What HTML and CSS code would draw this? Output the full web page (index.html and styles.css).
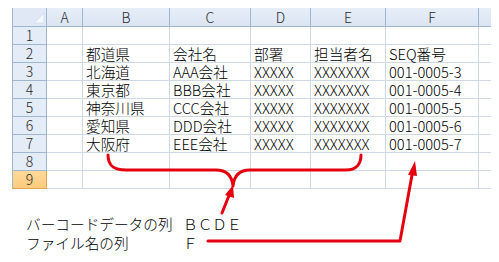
FILE: index.html
```html
<!DOCTYPE html>
<html lang="ja">
<head>
<meta charset="utf-8">
<link rel="stylesheet" href="styles.css">
</head>
<body>
<div class="sheet">
  <div class="grid">
    <div class="corner"><svg width="33" height="18" viewBox="0 0 33 18"><polygon points="21,15 31,15 31,5" fill="#f4f7fb" stroke="#c5d1e2" stroke-width="0.5"/></svg></div>
    <div class="ch">A</div><div class="ch">B</div><div class="ch">C</div><div class="ch">D</div><div class="ch">E</div><div class="ch">F</div><div class="ch edge"></div>

    <div class="rh">1</div><div class="c"></div><div class="c"></div><div class="c"></div><div class="c"></div><div class="c"></div><div class="c"></div><div class="c edge"></div>

    <div class="rh">2</div><div class="c"></div><div class="c">都道県</div><div class="c">会社名</div><div class="c">部署</div><div class="c">担当者名</div><div class="c">SEQ番号</div><div class="c edge"></div>

    <div class="rh">3</div><div class="c"></div><div class="c">北海道</div><div class="c">AAA会社</div><div class="c">XXXXX</div><div class="c">XXXXXXX</div><div class="c">001-0005-3</div><div class="c edge"></div>

    <div class="rh">4</div><div class="c"></div><div class="c">東京都</div><div class="c">BBB会社</div><div class="c">XXXXX</div><div class="c">XXXXXXX</div><div class="c">001-0005-4</div><div class="c edge"></div>

    <div class="rh">5</div><div class="c"></div><div class="c">神奈川県</div><div class="c">CCC会社</div><div class="c">XXXXX</div><div class="c">XXXXXXX</div><div class="c">001-0005-5</div><div class="c edge"></div>

    <div class="rh">6</div><div class="c"></div><div class="c">愛知県</div><div class="c">DDD会社</div><div class="c">XXXXX</div><div class="c">XXXXXXX</div><div class="c">001-0005-6</div><div class="c edge"></div>

    <div class="rh">7</div><div class="c"></div><div class="c">大阪府</div><div class="c">EEE会社</div><div class="c">XXXXX</div><div class="c">XXXXXXX</div><div class="c">001-0005-7</div><div class="c edge"></div>

    <div class="rh">8</div><div class="c"></div><div class="c"></div><div class="c"></div><div class="c"></div><div class="c"></div><div class="c"></div><div class="c edge"></div>

    <div class="rh active">9</div><div class="c"></div><div class="c"></div><div class="c"></div><div class="c"></div><div class="c"></div><div class="c"></div><div class="c edge"></div>
  </div>

  <div class="notes">
    <span class="label">バーコードデータの列</span><span class="val">ＢＣＤＥ</span>
    <span class="label">ファイル名の列</span><span class="val">Ｆ</span>
  </div>

  <svg class="marks" width="499" height="262" viewBox="0 0 499 262">
    <g fill="none" stroke="#e3000f" stroke-width="3" stroke-linecap="round" stroke-linejoin="round">
      <path d="M108,155 C108,166 114,170 126,170 L216,170 C227,170 232,176 233,186 C234,176 239,170 250,170 L346,170 C356,170 361,164 361,155"/>
      <path d="M222,213 L230,193"/>
      <path d="M208,241 L400,241 L412,175"/>
    </g>
    <g fill="#e3000f">
      <polygon points="233,185 225,195 234,198"/>
      <polygon points="415,161 408,175 417,176"/>
    </g>
  </svg>
</div>
</body>
</html>
```

FILE: styles.css
```css
html, body {
  margin: 0;
  padding: 0;
  background: #ffffff;
}

.sheet {
  position: relative;
  width: 499px;
  height: 262px;
  padding: 8px 0 0 12px;
  box-sizing: border-box;
  font-family: "Noto Sans CJK JP", "Noto Sans", sans-serif;
  font-size: 11pt;
  font-weight: 300;
  color: #000;
}

.grid {
  display: grid;
  grid-template-columns: 35px 36px 87px 81px 60px 75px 93px 12px;
  grid-template-rows: 19px repeat(9, 18px);
}

.grid > div {
  box-sizing: border-box;
  line-height: 17px;
  white-space: nowrap;
}

.corner {
  background: #dfe8f4;
  border-left: 1px solid #9eb6ce;
  border-right: 1px solid #9eb6ce;
  border-bottom: 1px solid #9eb6ce;
}

.corner svg {
  display: block;
}

.ch {
  background: linear-gradient(#e6eef8, #dbe5f2);
  border-right: 1px solid #9eb6ce;
  border-bottom: 1px solid #9eb6ce;
  text-align: center;
  color: #2a2a2a;
  font-size: 10.5pt;
  line-height: 18px !important;
}

.rh {
  background: #e4ecf7;
  border-left: 1px solid #9eb6ce;
  border-right: 1px solid #9eb6ce;
  border-bottom: 1px solid #9eb6ce;
  text-align: center;
  color: #2a2a2a;
  font-size: 10.5pt;
}

.rh.active {
  background: linear-gradient(#ffd99a, #fccc7c);
  border-bottom-color: #e3a64e;
  border-right-color: #e3a64e;
}

.c {
  border-right: 1px solid #d0d7e5;
  border-bottom: 1px solid #d0d7e5;
  padding-left: 3px;
}

.ch.edge {
  border-right: none;
}

.c.edge {
  border-right: none;
  padding-left: 0;
}

.notes {
  display: grid;
  grid-template-columns: 157px auto;
  row-gap: 0;
  margin: 25px 0 0 14px;
  line-height: 19px;
}

.marks {
  position: absolute;
  left: 0;
  top: 0;
  pointer-events: none;
}
```
